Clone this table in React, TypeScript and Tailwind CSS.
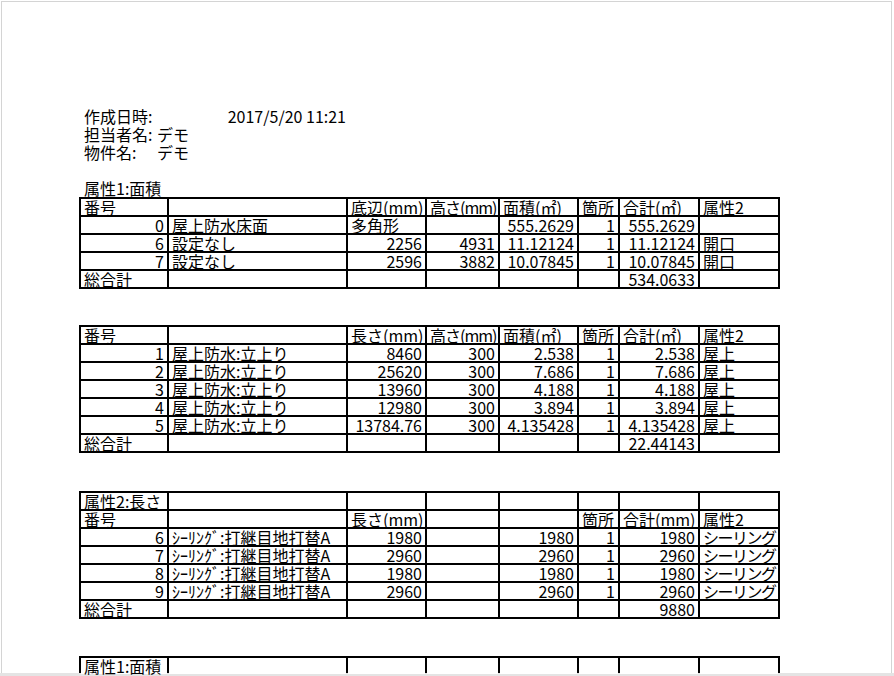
import React from "react"

type Row = string[]

const isNum = (s: string) => /^[\d.]+$/.test(s)

const table1: Row[] = [
  ["番号", "", "底辺(mm)", "高さ(mm)", "面積(㎡)", "箇所", "合計(㎡)", "属性2"],
  ["0", "屋上防水床面", "多角形", "", "555.2629", "1", "555.2629", ""],
  ["6", "設定なし", "2256", "4931", "11.12124", "1", "11.12124", "開口"],
  ["7", "設定なし", "2596", "3882", "10.07845", "1", "10.07845", "開口"],
  ["総合計", "", "", "", "", "", "534.0633", ""],
]

const table2: Row[] = [
  ["番号", "", "長さ(mm)", "高さ(mm)", "面積(㎡)", "箇所", "合計(㎡)", "属性2"],
  ["1", "屋上防水:立上り", "8460", "300", "2.538", "1", "2.538", "屋上"],
  ["2", "屋上防水:立上り", "25620", "300", "7.686", "1", "7.686", "屋上"],
  ["3", "屋上防水:立上り", "13960", "300", "4.188", "1", "4.188", "屋上"],
  ["4", "屋上防水:立上り", "12980", "300", "3.894", "1", "3.894", "屋上"],
  ["5", "屋上防水:立上り", "13784.76", "300", "4.135428", "1", "4.135428", "屋上"],
  ["総合計", "", "", "", "", "", "22.44143", ""],
]

const table3: Row[] = [
  ["属性2:長さ", "", "", "", "", "", "", ""],
  ["番号", "", "長さ(mm)", "", "", "箇所", "合計(mm)", "属性2"],
  ["6", "ｼｰﾘﾝｸﾞ:打継目地打替A", "1980", "", "1980", "1", "1980", "シーリング"],
  ["7", "ｼｰﾘﾝｸﾞ:打継目地打替A", "2960", "", "2960", "1", "2960", "シーリング"],
  ["8", "ｼｰﾘﾝｸﾞ:打継目地打替A", "1980", "", "1980", "1", "1980", "シーリング"],
  ["9", "ｼｰﾘﾝｸﾞ:打継目地打替A", "2960", "", "2960", "1", "2960", "シーリング"],
  ["総合計", "", "", "", "", "", "9880", ""],
]

const table4: Row[] = [["属性1:面積", "", "", "", "", "", "", ""]]

// cells whose text is wider than the column in our font
const tight: Record<string, string> = {
  "シーリング": "tracking-[-1.5px]",
  "高さ(mm)": "tracking-[-1px]",
}

function Sheet({ rows, className = "" }: { rows: Row[]; className?: string }) {
  return (
    <div
      className={`grid w-[701px] grid-cols-[86px_177px_77px_71px_77px_39px_78px_78px] gap-[2px] bg-black p-[2px] ${className}`}
    >
      {rows.map((row, r) =>
        row.map((cell, c) => (
          <div
            key={`${r}-${c}`}
            className={`h-[16px] overflow-x-clip whitespace-nowrap bg-white px-[3px] leading-[16px] ${
              isNum(cell) ? "text-right" : "text-left"
            } ${tight[cell] ?? ""}`}
          >
            {cell}
          </div>
        ))
      )}
    </div>
  )
}

export default function App() {
  return (
    <div className="h-[676px] w-[894px] overflow-hidden bg-white font-['Noto_Sans_CJK_JP',sans-serif] text-[16px] leading-[16px] text-black">
      <div className="ml-px mt-px h-[672px] w-[891px] border border-b-0 border-[#d4d4d4] pl-[77px] pt-[105px]">
        {/* Header */}
        <div className="flex h-[18px] w-[267px] items-center justify-between pl-[5px]">
          <span>作成日時:</span>
          <span>2017/5/20 11:21</span>
        </div>
        <div className="flex h-[18px] items-center pl-[5px]">
          <span className="w-[73px]">担当者名:</span>
          <span>デモ</span>
        </div>
        <div className="flex h-[18px] items-center pl-[5px]">
          <span className="w-[73px]">物件名:</span>
          <span>デモ</span>
        </div>
        <div className="h-[18px]" />
        <div className="flex h-[18px] items-center pl-[5px]">属性1:面積</div>

        {/* Tables */}
        <Sheet rows={table1} />
        <Sheet rows={table2} className="mt-[36px]" />
        <Sheet rows={table3} className="mt-[38px]" />
        <Sheet rows={table4} className="mt-[37px]" />
      </div>
      <div className="h-[3px] bg-[#e4e4e4]" />
    </div>
  )
}
